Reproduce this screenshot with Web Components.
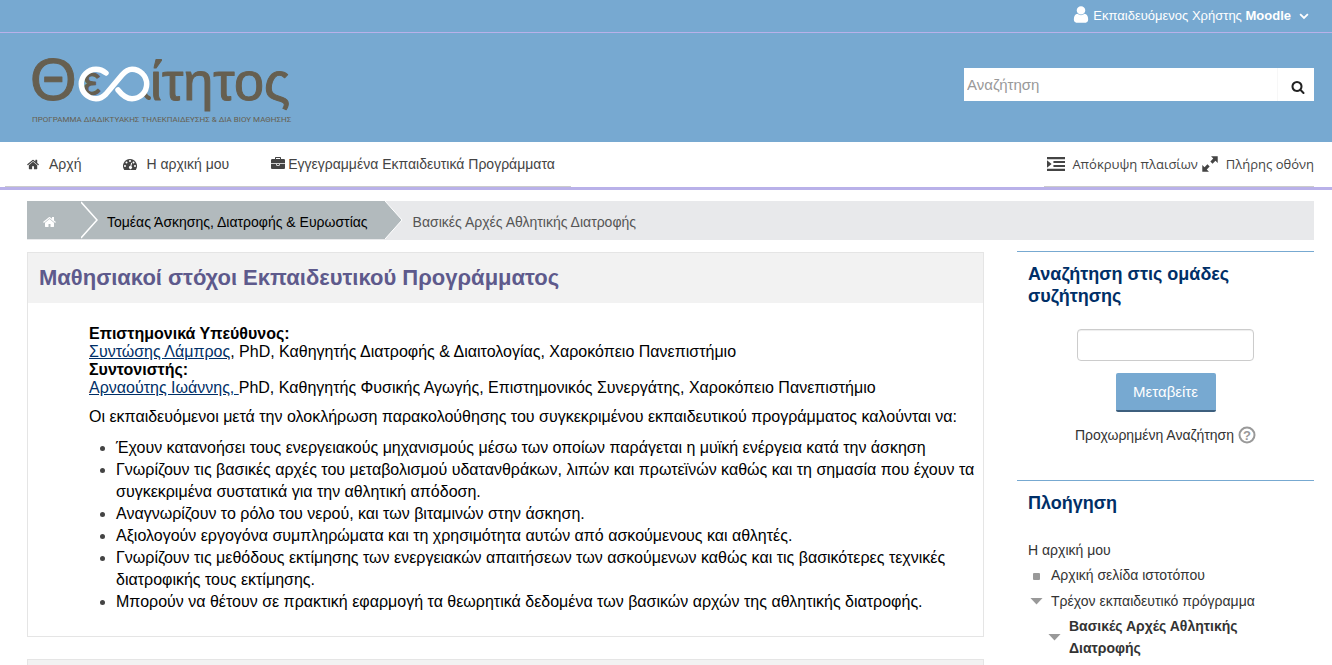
<!DOCTYPE html>
<html lang="el">
<head>
<meta charset="utf-8">
<title>Θεαίτητος</title>
<style>
  body { margin: 0; background: #fff; color: #333; font: 14px/22px "Liberation Sans", Arial, sans-serif; }
</style>
</head>
<body>
<learn-page></learn-page>
<script>
const define = (name, html) => customElements.define(name, class extends HTMLElement {
  constructor() {
    super();
    this.attachShadow({ mode: 'open' }).innerHTML = html;
  }
});

const ICONS = {
  home: '<path d="M1408 992v480q0 26-19 45t-45 19h-384v-384h-256v384h-384q-26 0-45-19t-19-45v-480q0-1 .5-3t.5-3l575-474 575 474q1 2 1 6zm223-69l-62 74q-8 9-21 11h-3q-13 0-21-7l-692-577-692 577q-12 8-24 7-13-2-21-11l-62-74q-8-10-7-23.500t11-21.500l719-599q32-26 76-26t76 26l244 204v-195q0-14 9-23t23-9h192q14 0 23 9t9 23v408l219 182q10 8 11 21.500t-7 23.500z"/>',
  user: '<path d="M1536 1399q0 109-62.500 187t-150.500 78h-854q-88 0-150.500-78t-62.500-187q0-85 8.500-160.500t31.500-152 58.500-131 94-89 134.500-34.500q131 128 313 128t313-128q76 0 134.500 34.500t94 89 58.500 131 31.500 152 8.500 160.500zm-256-887q0 159-112.500 271.500t-271.500 112.500-271.500-112.500-112.500-271.500 112.500-271.500 271.500-112.500 271.500 112.500 112.500 271.500z"/>',
  search: '<path d="M1216 832q0-185-131.500-316.500t-316.500-131.500-316.500 131.500-131.500 316.500 131.500 316.500 316.500 131.500 316.500-131.500 131.500-316.500zm512 832q0 52-38 90t-90 38q-54 0-90-38l-343-342q-179 124-399 124-143 0-273.500-55.500t-225-150-150-225-55.500-273.500 55.500-273.500 150-225 225-150 273.500-55.500 273.500 55.500 225 150 150 225 55.500 273.500q0 220-124 399l343 343q37 37 37 90z"/>',
  briefcase: '<path d="M640 256h512v-128h-512v128zm1152 640v480q0 66-47 113t-113 47h-1472q-66 0-113-47t-47-113v-480h672v160q0 26 19 45t45 19h320q26 0 45-19t19-45v-160h672zm-768 0v128h-256v-128h256zm768-480v384h-1792v-384q0-66 47-113t113-47h352v-160q0-40 28-68t68-28h576q40 0 68 28t28 68v160h352q66 0 113 47t47 113z"/>',
  gauge: '<path fill-rule="evenodd" d="M896 256A896 896 0 0 0 140 1635Q155 1664 190 1664H1602Q1637 1664 1652 1635A896 896 0 0 0 896 256ZM256 1024a128 128 0 1 1 0 256a128 128 0 1 1 0-256ZM448 576a128 128 0 1 1 0 256a128 128 0 1 1 0-256ZM896 384a128 128 0 1 1 0 256a128 128 0 1 1 0-256ZM1344 576a128 128 0 1 1 0 256a128 128 0 1 1 0-256ZM1536 1024a128 128 0 1 1 0 256a128 128 0 1 1 0-256ZM936 1157l101-382q8-26 31-40t49-7 39 30 8 49l-101 382a192 192 0 1 1-127-32Z"/>',
  indent: '<path d="M0 0H1792V280H0ZM640 500H1792V780H640ZM640 1010H1792V1290H640ZM0 1512H1792V1792H0ZM0 420L460 896L0 1370Z"/>',
  expand: '<path d="M1000 128H1664V792L1440 570L1150 860L930 640L1220 350ZM792 1664H128V1000L352 1222L642 932L862 1152L572 1442Z"/>',
  chevron: '<path d="M200 560L896 1250L1592 560" fill="none" stroke="currentColor" stroke-width="320"/>'
};

customElements.define('ui-icon', class extends HTMLElement {
  connectedCallback() {
    if (this.shadowRoot) return;
    this.attachShadow({ mode: 'open' }).innerHTML = `
      <style>
        :host { display: inline-block; flex: none; width: 14px; height: 14px; }
        svg { display: block; width: 100%; height: 100%; fill: currentColor; }
      </style>
      <svg viewBox="0 0 1792 1792" preserveAspectRatio="none" aria-hidden="true">${ICONS[this.getAttribute('name')]}</svg>`;
  }
});

define('site-logo', `
  <style>
    :host { display: block; }
    svg { display: block; width: 280px; height: 92px; fill: #665f50; }
    .word { font-family: "Liberation Sans", Arial, sans-serif; font-size: 54px; stroke: #665f50; stroke-width: 1; stroke-linejoin: round; }
    .big { font-size: 60px; }
    .small { font-size: 40px; }
    .tag { font-family: Roboto, "Liberation Sans", sans-serif; font-size: 8px; }
    path { fill: none; stroke: #fff; stroke-width: 5.500; stroke-linecap: round; }
    .tail { stroke: #665f50; stroke-width: 4; }
    circle { fill: #77a9d1; }
  </style>
  <svg viewBox="0 -18 280 92" role="img" aria-label="Θεαίτητος">
    <text class="word"><tspan class="big" x="0" y="46">Θ</tspan><tspan class="small" x="53" y="41">ε</tspan><tspan class="small" x="93" y="41">α</tspan><tspan x="120" y="46">ίτητος</tspan></text>
    <text class="tag" x="2" y="68">ΠΡΟΓΡΑΜΜΑ ΔΙΑΔΙΚΤΥΑΚΗΣ ΤΗΛΕΚΠΑΙΔΕΥΣΗΣ &amp; ΔΙΑ ΒΙΟΥ ΜΑΘΗΣΗΣ</text>
    <circle cx="102" cy="30" r="14"/>
    <path class="tail" d="M114 38Q116 43 119 44"/>
    <path d="M76 19C73 16.500 70 15.300 66 15.300A14.700 14.700 0 0 0 66 44.700C70 44.700 73 43 76 40L92 21C95 17.500 98 15.300 102 15.300A14.700 14.700 0 0 1 102 44.700C97 44.700 92 41 88 36"/>
  </svg>`);

define('user-bar', `
  <style>
    :host { display: flex; justify-content: flex-end; padding: 0 23px; background: #77a9d1; border-bottom: 1px solid #b9b1e9; }
    a { display: flex; align-items: center; height: 32px; color: #fff; font-size: 13px; text-decoration: none; }
    ui-icon { width: 20px; height: 19px; margin-right: 2px; margin-bottom: 4px; }
    .caret { width: 10px; height: 10px; margin: 0 0 0 8px; }
    b { font-weight: 700; }
  </style>
  <a href="#"><ui-icon name="user"></ui-icon><span>Εκπαιδευόμενος Χρήστης <b>Moodle</b></span><ui-icon class="caret" name="chevron"></ui-icon></a>`);

define('site-search', `
  <style>
    :host { display: block; width: 350px; margin-top: 32px; }
    form { display: flex; height: 33px; margin: 0; }
    input { flex: 1; min-width: 0; box-sizing: border-box; border: 0; border-right: 1px solid #f7f7f7; padding: 0 3px; background: #fff; color: #333; font: 15px "Liberation Sans", Arial, sans-serif; outline: 0; }
    input::placeholder { color: #999; opacity: 1; }
    button { display: flex; align-items: center; justify-content: center; width: 36px; padding: 4px 0 0 4px; border: 0; background: #fff; color: #222; }
  </style>
  <form><input type="text" placeholder="Αναζήτηση" aria-label="Αναζήτηση"><button type="button" aria-label="Υποβολή"><ui-icon name="search"></ui-icon></button></form>`);

define('site-header', `
  <style>
    :host { display: flex; justify-content: space-between; align-items: flex-start; padding: 3px 18px 14px 30px; background: #77a9d1; }
  </style>
  <site-logo></site-logo><site-search></site-search>`);

define('nav-link', `
  <style>
    :host { display: block; }
    a { display: flex; align-items: center; height: 100%; color: #444; text-decoration: none; white-space: nowrap; }
    ::slotted(ui-icon) { margin-right: var(--icon-gap, 9px); }
  </style>
  <a href="#"><slot name="icon"></slot><span><slot></slot></span></a>`);

define('main-nav', `
  <style>
    :host { display: flex; justify-content: space-between; padding: 0 18px 0 5px; border-bottom: 3px solid #b9b1e9; }
    nav { display: flex; height: 44px; border-bottom: 1px solid #ccc; }
    .left { gap: 42px; padding: 0 16px 0 22px; font-size: 14px; }
    .tools { gap: 3px; padding-left: 3px; font-family: "Open Sans", "Noto Sans", sans-serif; font-size: 13px; --icon-gap: 7px; }
    .tight { --icon-gap: 3px; }
    .wide { width: 18px; }
    .expand { width: 18px; height: 18px; }
    .small { width: 13px; height: 13px; }
  </style>
  <nav class="left">
    <nav-link><ui-icon slot="icon" class="small" name="home"></ui-icon>Αρχή</nav-link>
    <nav-link><ui-icon slot="icon" name="gauge"></ui-icon>Η αρχική μου</nav-link>
    <nav-link class="tight"><ui-icon slot="icon" name="briefcase"></ui-icon>Εγγεγραμμένα Εκπαιδευτικά Προγράμματα</nav-link>
  </nav>
  <nav class="tools">
    <nav-link><ui-icon slot="icon" class="wide" name="indent"></ui-icon>Απόκρυψη πλαισίων</nav-link>
    <nav-link><ui-icon slot="icon" class="expand" name="expand"></ui-icon>Πλήρης οθόνη</nav-link>
  </nav>`);

define('bread-crumb', `
  <style>
    :host { display: block; background: #e8e9eb; }
    nav { display: flex; height: 39px; }
    a, span { display: flex; align-items: center; font-size: 14px; text-decoration: none; padding-top: 3px; height: 35px; }
    a { background: #b2babd; color: #000; }
    .home { width: 54px; padding-left: 16px; box-sizing: border-box; color: #fff; height: 38px; }
    .course { padding-left: 8px; padding-right: 17px; }
    span { color: #555; padding-left: 10px; }
    svg { display: block; width: 18px; height: 38px; flex: none; }
  </style>
  <nav aria-label="Διαδρομή">
    <a class="home" href="#" aria-label="Αρχή"><ui-icon name="home"></ui-icon></a>
    <svg viewBox="0 0 18 38"><path fill="#b2babd" d="M0 0H18V38H0Z"/><path d="M0 1L16 19L0 37" fill="none" stroke="#fff" stroke-width="1.500"/></svg>
    <a class="course" href="#">Τομέας Άσκησης, Διατροφής &amp; Ευρωστίας</a>
    <svg viewBox="0 0 18 38"><path fill="#b2babd" d="M0 0L17 19L0 38Z"/><path d="M0 0L17 19L0 38" fill="none" stroke="#fff"/></svg>
    <span>Βασικές Αρχές Αθλητικής Διατροφής</span>
  </nav>`);

define('course-section', `
  <style>
    :host { display: block; border: 1px solid #e5e5e5; }
    header { min-height: 50px; box-sizing: border-box; padding: 12px 11px; background: #f2f2f2; }
    ::slotted(h2) { margin: 0; color: #5e5a8c; font-size: 22px; line-height: 26px; }
    div { padding: 22px 5px 23px 61px; color: #000; font-size: 16px; }
  </style>
  <header><slot name="title"></slot></header>
  <div><slot></slot></div>`);

define('course-goals', `
  <style>
    :host { display: block; }
    p { margin: 0 0 9px; }
    .staff { line-height: 18px; }
    a { color: #002f67; text-decoration: underline; }
    ul { margin: 0; padding-left: 27px; }
    li::marker { color: #444; }
  </style>
  <p class="staff"><b>Επιστημονικά Υπεύθυνος:</b><br><a href="#">Συντώσης Λάμπρος</a>, PhD, Καθηγητής Διατροφής &amp; Διαιτολογίας, Χαροκόπειο Πανεπιστήμιο<br><b>Συντονιστής:</b><br><a href="#">Αρναούτης Ιωάννης, </a>PhD, Καθηγητής Φυσικής Αγωγής, Επιστημονικός Συνεργάτης, Χαροκόπειο Πανεπιστήμιο</p>
  <p>Οι εκπαιδευόμενοι μετά την ολοκλήρωση παρακολούθησης του συγκεκριμένου εκπαιδευτικού προγράμματος καλούνται να:</p>
  <ul>
    <li>Έχουν κατανοήσει τους ενεργειακούς μηχανισμούς μέσω των οποίων παράγεται η μυϊκή ενέργεια κατά την άσκηση</li>
    <li>Γνωρίζουν τις βασικές αρχές του μεταβολισμού υδατανθράκων, λιπών και πρωτεϊνών καθώς και τη σημασία που έχουν τα συγκεκριμένα συστατικά για την αθλητική απόδοση.</li>
    <li>Αναγνωρίζουν το ρόλο του νερού, και των βιταμινών στην άσκηση.</li>
    <li>Αξιολογούν εργογόνα συμπληρώματα και τη χρησιμότητα αυτών από ασκούμενους και αθλητές.</li>
    <li>Γνωρίζουν τις μεθόδους εκτίμησης των ενεργειακών απαιτήσεων των ασκούμενων καθώς και τις βασικότερες τεχνικές διατροφικής τους εκτίμησης.</li>
    <li>Μπορούν να θέτουν σε πρακτική εφαρμογή τα θεωρητικά δεδομένα των βασικών αρχών της αθλητικής διατροφής.</li>
  </ul>`);

define('side-block', `
  <style>
    :host { display: block; border-top: 1px solid #77a9d1; padding: 11px 11px 0; }
    ::slotted(h2) { margin: 0; color: #002f67; font-size: 18px; line-height: 22px; }
  </style>
  <slot name="title"></slot><slot></slot>`);

define('forum-search', `
  <style>
    :host { display: block; padding: 22px 0 34px; }
    form { display: flex; flex-direction: column; align-items: center; margin: 0; }
    input { width: 177px; max-width: 100%; height: 32px; box-sizing: border-box; border: 1px solid #ccc; border-radius: 4px; padding: 4px 6px; box-shadow: inset 0 1px 1px #eee; font: 14px "Liberation Sans", Arial, sans-serif; }
    button { height: 39px; width: 100px; margin: 12px 0; padding: 0; border: 0; border-bottom: 2px solid #3d5f7e; border-radius: 2px; background: #77a9d1; color: #fff; font: 15px "Liberation Sans", Arial, sans-serif; }
    p { display: flex; align-items: center; gap: 4px; margin: 0; }
    a { color: #333; text-decoration: none; }
    svg { display: block; width: 18px; height: 18px; }
    text { font: bold 13px "Liberation Sans", Arial, sans-serif; fill: #999; text-anchor: middle; }
  </style>
  <form>
    <input type="text" aria-label="Αναζήτηση">
    <button type="button">Μεταβείτε</button>
    <p><a href="#">Προχωρημένη Αναζήτηση</a><a href="#" aria-label="Βοήθεια"><svg viewBox="0 0 18 18"><circle cx="9" cy="9" r="7.500" fill="none" stroke="#999" stroke-width="2"/><text x="9" y="14">?</text></svg></a></p>
  </form>`);

define('nav-tree', `
  <style>
    :host { display: block; padding: 25px 0 8px; }
    ul { list-style: none; margin: 0; padding: 0; }
    li { margin-bottom: 4px; }
    a { color: #333; text-decoration: none; }
    .row { display: flex; align-items: center; gap: 7px; }
    .top { display: block; margin-bottom: 3px; }
    .sub { padding-left: 18px; margin-top: 3px; }
    .mark { flex: none; display: block; width: 7px; height: 7px; margin: 2px 4px 0 5px; border-radius: 1px; background: #999; }
    .open { flex: none; width: 13px; height: 7px; margin: 0 1px 0 2px; background: #999; clip-path: polygon(0 0, 100% 0, 50% 100%); }
  </style>
  <a class="top" href="#">Η αρχική μου</a>
  <ul>
    <li class="row"><i class="mark"></i><a href="#">Αρχική σελίδα ιστοτόπου</a></li>
    <li>
      <div class="row"><i class="open"></i><a href="#">Τρέχον εκπαιδευτικό πρόγραμμα</a></div>
      <ul class="sub"><li class="row"><i class="open"></i><a href="#"><b>Βασικές Αρχές Αθλητικής Διατροφής</b></a></li></ul>
    </li>
  </ul>`);

define('learn-page', `
  <style>
    :host { display: block; }
    .content { padding: 11px 18px 0 27px; }
    .columns { display: grid; grid-template-columns: minmax(0, 29fr) minmax(0, 9fr); gap: 33px; align-items: start; margin-top: 11px; }
    main { display: grid; gap: 22px; padding-top: 1px; }
  </style>
  <user-bar></user-bar>
  <site-header></site-header>
  <main-nav></main-nav>
  <div class="content">
    <bread-crumb></bread-crumb>
    <div class="columns">
      <main>
        <course-section><h2 slot="title">Μαθησιακοί στόχοι Εκπαιδευτικού Προγράμματος</h2><course-goals></course-goals></course-section>
        <course-section></course-section>
      </main>
      <aside>
        <side-block><h2 slot="title">Αναζήτηση στις ομάδες συζήτησης</h2><forum-search></forum-search></side-block>
        <side-block><h2 slot="title">Πλοήγηση</h2><nav-tree></nav-tree></side-block>
      </aside>
    </div>
  </div>`);
</script>
</body>
</html>
